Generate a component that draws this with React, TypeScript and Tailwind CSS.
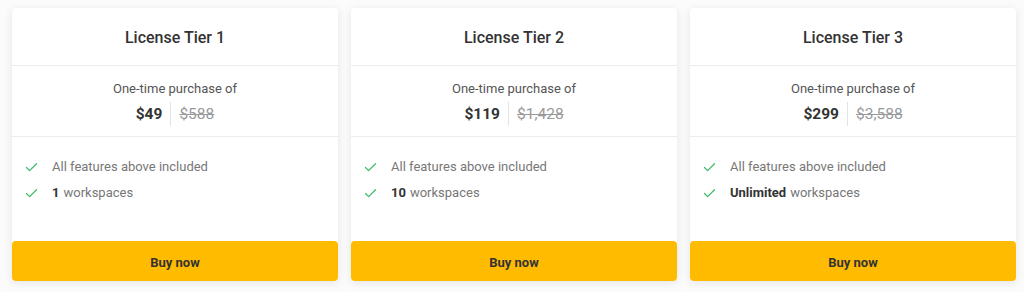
import { Check } from 'lucide-react';

interface Tier {
  name: string;
  price: string;
  was: string;
  seats: string;
}

const tiers: Tier[] = [
  { name: 'License Tier 1', price: '$49', was: '$588', seats: '1' },
  { name: 'License Tier 2', price: '$119', was: '$1,428', seats: '10' },
  { name: 'License Tier 3', price: '$299', was: '$3,588', seats: 'Unlimited' },
];

function TierCard({ tier }: { tier: Tier }) {
  return (
    <div className="flex h-[273px] flex-col rounded bg-white shadow-[0_2px_10px_rgba(0,0,0,0.09)]">
      <div className="flex h-[58px] items-center justify-center border-b border-[#ececec] pt-[3px]">
        <h3 className="text-[16px] font-medium text-[#333]">{tier.name}</h3>
      </div>
      <div className="flex h-[71px] flex-col items-center justify-center border-b border-[#ececec] pt-[3px]">
        <p className="text-[13px] leading-[18px] text-[#555]">One-time purchase of</p>
        <div className="mt-[4px] flex items-center">
          <span className="text-[15.5px] font-bold leading-[20px] text-[#333]">{tier.price}</span>
          <span className="mx-[8px] h-[24px] w-px bg-[#e3e3e3]" />
          <span className="text-[15.5px] leading-[20px] text-[#999] line-through">{tier.was}</span>
        </div>
      </div>
      <ul className="flex flex-1 flex-col gap-[8px] px-[12px] pt-[21px]">
        <li className="flex items-center text-[13px] leading-[18px] text-[#777]">
          <Check size={15} strokeWidth={2} className="mr-[13px] text-[#3fba6a]" />
          All features above included
        </li>
        <li className="flex items-center text-[13px] leading-[18px] text-[#777]">
          <Check size={15} strokeWidth={2} className="mr-[13px] text-[#3fba6a]" />
          <b className="mr-[4px] font-bold text-[#333]">{tier.seats}</b>workspaces
        </li>
      </ul>
      <button className="h-[40px] rounded bg-[#ffbb00] pt-[3px] text-[13px] font-bold text-[#333]">Buy now</button>
    </div>
  );
}

export default function App() {
  return (
    <div
      className="h-[292px] w-[1024px] bg-[#fbfbfb] pl-[12px] pr-[8px] pt-[8px]"
      style={{ fontFamily: 'Roboto, "Liberation Sans", sans-serif' }}
    >
      <div className="grid grid-cols-3 gap-[13px]">
        {tiers.map((t) => (
          <TierCard key={t.name} tier={t} />
        ))}
      </div>
    </div>
  );
}
